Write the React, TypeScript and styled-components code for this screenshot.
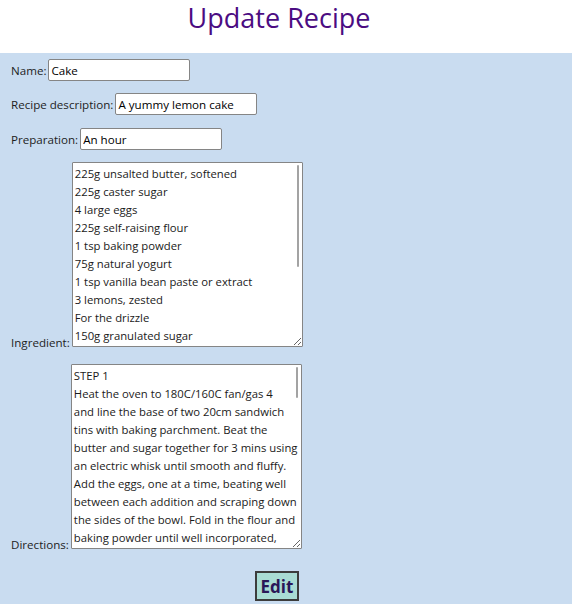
import React from "react";
import styled, { createGlobalStyle } from "styled-components";

const GlobalStyle = createGlobalStyle`
  html, body {
    margin: 0;
    padding: 0;
    background: #ffffff;
    font-family: "Open Sans", "Noto Sans", sans-serif;
  }
`;

const Page = styled.div`
  display: flex;
  flex-direction: column;
  min-height: 604px;
`;

const Header = styled.h1`
  margin: 0;
  height: 53px;
  padding-right: 14px;
  text-align: center;
  font-size: 27px;
  font-weight: 500;
  line-height: 36px;
  color: #4b0c82;
  background: #ffffff;
`;

const Form = styled.form`
  flex: 1;
  display: flex;
  flex-direction: column;
  padding: 6px 11px 4px 11px;
  background: #c9dcf0;
`;

const Row = styled.div<{ $gap: number; $bottom?: boolean }>`
  display: flex;
  align-items: ${(p) => (p.$bottom ? "flex-end" : "baseline")};
  gap: 2px;
  margin-bottom: ${(p) => p.$gap}px;
`;

const Label = styled.label<{ $bottom?: boolean }>`
  font-size: 11.6px;
  color: #1e1e1e;
  margin-bottom: ${(p) => (p.$bottom ? "-3px" : "0")};
`;

const TextInput = styled.input`
  box-sizing: border-box;
  width: 142px;
  height: 22px;
  padding: 1px 2px;
  border: 1px solid #858585;
  border-radius: 2px;
  background: #ffffff;
  font-family: inherit;
  font-size: 11.6px;
  color: #000000;
  outline: none;
`;

const AreaWrap = styled.div<{ $thumbTop: number; $thumbHeight: number }>`
  position: relative;
  display: flex;

  &::after {
    content: "";
    position: absolute;
    right: 4px;
    top: ${(p) => p.$thumbTop}px;
    width: 2px;
    height: ${(p) => p.$thumbHeight}px;
    border-radius: 1px;
    background: #a3a3a3;
    pointer-events: none;
  }
`;

const TextArea = styled.textarea`
  box-sizing: border-box;
  width: 231px;
  height: 185px;
  padding: 2px 1px 2px 2px;
  border: 1px solid #858585;
  border-radius: 1px;
  background: #ffffff;
  font-family: inherit;
  font-size: 11.3px;
  line-height: 18px;
  color: #1a1a1a;
  resize: vertical;
  outline: none;
  overflow-y: scroll;
  scrollbar-width: none;
`;

const Actions = styled.div`
  display: flex;
  justify-content: center;
  padding-right: 18px;
  margin-top: 5px;
`;

const EditButton = styled.button`
  height: 30px;
  padding: 0 4px;
  border: 2px solid #3c3c3c;
  background: #a9dcd4;
  color: #2a1758;
  font-family: inherit;
  font-size: 17px;
  font-weight: 700;
  cursor: pointer;
`;

const ingredients = [
  "225g unsalted butter, softened",
  "225g caster sugar",
  "4 large eggs",
  "225g self-raising flour",
  "1 tsp baking powder",
  "75g natural yogurt",
  "1 tsp vanilla bean paste or extract",
  "3 lemons, zested",
  "For the drizzle",
  "150g granulated sugar",
  "2 lemons, juiced",
  "For the icing",
  "200g icing sugar",
  "1 lemon, juiced",
].join("\n");

// line breaks follow the wrap points of the original box
const directions = [
  "STEP 1",
  "Heat the oven to 180C/160C fan/gas 4",
  "and line the base of two 20cm sandwich",
  "tins with baking parchment. Beat the",
  "butter and sugar together for 3 mins using",
  "an electric whisk until smooth and fluffy.",
  "Add the eggs, one at a time, beating well",
  "between each addition and scraping down",
  "the sides of the bowl. Fold in the flour and",
  "baking powder until well incorporated,",
  "then stir in the yogurt, vanilla and lemon",
  "zest.",
  "STEP 2",
  "Divide the mixture between the tins and bake for 25-30 mins until golden and a skewer inserted into the middle comes out clean.",
  "STEP 3",
  "Meanwhile, make the drizzle. Mix the sugar and lemon juice together in a small bowl.",
].join("\n");

export default function App() {
  return (
    <Page>
      <GlobalStyle />
      <Header>Update Recipe</Header>
      <Form onSubmit={(e) => e.preventDefault()}>
        <Row $gap={12}>
          <Label>Name:</Label>
          <TextInput defaultValue="Cake" />
        </Row>
        <Row $gap={13}>
          <Label>Recipe description:</Label>
          <TextInput defaultValue="A yummy lemon cake" />
        </Row>
        <Row $gap={12}>
          <Label>Preparation:</Label>
          <TextInput defaultValue="An hour" />
        </Row>
        <Row $gap={17} $bottom>
          <Label $bottom>Ingredient:</Label>
          <AreaWrap $thumbTop={3} $thumbHeight={102}>
            <TextArea defaultValue={ingredients} />
          </AreaWrap>
        </Row>
        <Row $gap={17} $bottom>
          <Label $bottom>Directions:</Label>
          <AreaWrap $thumbTop={3} $thumbHeight={31}>
            <TextArea defaultValue={directions} />
          </AreaWrap>
        </Row>
        <Actions>
          <EditButton type="button">Edit</EditButton>
        </Actions>
      </Form>
    </Page>
  );
}
